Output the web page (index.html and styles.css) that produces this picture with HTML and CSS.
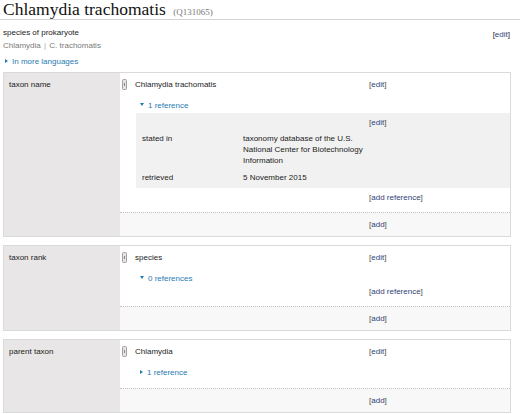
FILE: index.html
```html
<!DOCTYPE html>
<html lang="en">
<head>
    <meta charset="UTF-8">
    <meta name="viewport" content="width=device-width, initial-scale=1.0">
    <title>Chlamydia trachomatis (Q131065)</title>
    <link rel="stylesheet" href="styles.css">
</head>
<body>
    <h1 class="title">
        <span class="title-label">Chlamydia trachomatis</span>
        <span class="qid">(Q131065)</span>
    </h1>

    <div class="header">
        <div class="desc-row">
            <span>species of prokaryote</span>
            <span class="tool">[<a href="#">edit</a>]</span>
        </div>
        <div class="aliases">Chlamydia <span class="sep">|</span> C. trachomatis</div>
        <div class="more"><span class="tri-right"></span>In more languages</div>
    </div>

    <!-- taxon name -->
    <div class="group">
        <div class="prop">taxon name</div>
        <div class="claims">
            <div class="claim">
                <div class="main">
                    <span class="rank"><svg width="5" height="11" viewBox="0 0 5 11"><rect x="0.5" y="0.5" width="4" height="10" rx="1" fill="#e4e4e4" stroke="#a0a0a0"/><rect x="2" y="4" width="1" height="3" fill="#888"/></svg></span>
                    <span class="value">Chlamydia trachomatis</span>
                    <span class="tools">[<a href="#">edit</a>]</span>
                </div>
                <div class="refs-toggle"><span class="tri-down"></span>1 reference</div>
                <div class="ref">
                    <div class="ref-head">
                        <span class="ref-spacer"></span>
                        <span class="tools">[<a href="#">edit</a>]</span>
                    </div>
                    <div class="snak">
                        <span class="snak-prop">stated in</span>
                        <span class="snak-val">taxonomy database of the U.S. National Center for Biotechnology Information</span>
                    </div>
                    <div class="snak">
                        <span class="snak-prop">retrieved</span>
                        <span class="snak-val">5 November 2015</span>
                    </div>
                </div>
                <div class="add-ref">
                    <span class="ref-spacer"></span>
                    <span class="tools">[<a href="#">add reference</a>]</span>
                </div>
            </div>
            <div class="add-claim">
                <span class="ref-spacer"></span>
                <span class="tools">[<a href="#">add</a>]</span>
            </div>
        </div>
    </div>

    <!-- taxon rank -->
    <div class="group">
        <div class="prop">taxon rank</div>
        <div class="claims">
            <div class="claim">
                <div class="main">
                    <span class="rank"><svg width="5" height="11" viewBox="0 0 5 11"><rect x="0.5" y="0.5" width="4" height="10" rx="1" fill="#e4e4e4" stroke="#a0a0a0"/><rect x="2" y="4" width="1" height="3" fill="#888"/></svg></span>
                    <span class="value">species</span>
                    <span class="tools">[<a href="#">edit</a>]</span>
                </div>
                <div class="refs-toggle"><span class="tri-down"></span>0 references</div>
                <div class="add-ref">
                    <span class="ref-spacer"></span>
                    <span class="tools">[<a href="#">add reference</a>]</span>
                </div>
            </div>
            <div class="add-claim">
                <span class="ref-spacer"></span>
                <span class="tools">[<a href="#">add</a>]</span>
            </div>
        </div>
    </div>

    <!-- parent taxon -->
    <div class="group">
        <div class="prop">parent taxon</div>
        <div class="claims">
            <div class="claim collapsed">
                <div class="main">
                    <span class="rank"><svg width="5" height="11" viewBox="0 0 5 11"><rect x="0.5" y="0.5" width="4" height="10" rx="1" fill="#e4e4e4" stroke="#a0a0a0"/><rect x="2" y="4" width="1" height="3" fill="#888"/></svg></span>
                    <span class="value">Chlamydia</span>
                    <span class="tools">[<a href="#">edit</a>]</span>
                </div>
                <div class="refs-toggle"><span class="tri-right"></span>1 reference</div>
            </div>
            <div class="add-claim">
                <span class="ref-spacer"></span>
                <span class="tools">[<a href="#">add</a>]</span>
            </div>
        </div>
    </div>
</body>
</html>
```

FILE: styles.css
```css
html, body {
    margin: 0;
    background-color: #fff;
    font-family: "Liberation Sans", Arial, sans-serif;
    font-size: 8px;
    line-height: 11px;
    color: #1c1c1c;
}
a {
    color: #2f4377;
    text-decoration: none;
}

.title {
    margin: 0;
    padding: 0 0 1px 3px;
    height: 20px;
    box-sizing: border-box;
    border-bottom: 1px solid #d4d4d4;
    font-family: "Liberation Serif", Georgia, serif;
    font-weight: normal;
    font-size: 17.5px;
    line-height: 19px;
    color: #111;
    white-space: nowrap;
}
.qid {
    margin-left: 3px;
    font-size: 9px;
    color: #777;
}

.header {
    padding: 7px 10px 0 3px;
    margin-bottom: 5px;
}
.desc-row {
    display: flex;
    justify-content: space-between;
    align-items: flex-end;
}
.desc-row .tool {
    position: relative;
    top: 2px;
}
.aliases {
    margin-top: 2px;
    color: #7a7a7a;
}
.aliases .sep {
    color: #aaa;
    margin: 0 1px;
}
.more {
    margin-top: 5px;
    padding-left: 2px;
    color: #1f7bb2;
}

.tri-right, .tri-down {
    display: inline-block;
    vertical-align: middle;
    margin-right: 4px;
    position: relative;
    top: -1px;
}
.tri-right {
    border-left: 3px solid #1f7bb2;
    border-top: 2px solid transparent;
    border-bottom: 2px solid transparent;
}
.tri-down {
    border-top: 3px solid #1f7bb2;
    border-left: 2px solid transparent;
    border-right: 2px solid transparent;
}

.group {
    display: flex;
    margin: 0 9px 8px 3px;
    border: 1px solid #dadada;
}
.prop {
    width: 116px;
    flex-shrink: 0;
    box-sizing: border-box;
    padding: 6px 5px;
    background-color: #e8e6e6;
}
.claims {
    flex: 1;
    min-width: 0;
}
.claim.collapsed {
    padding-bottom: 8px;
}
.main {
    display: flex;
    padding-top: 6px;
}
.rank {
    width: 15px;
    padding-left: 2px;
    box-sizing: border-box;
    flex-shrink: 0;
}
.rank svg {
    display: block;
}
.value {
    flex: 1;
}
.tools {
    width: 141px;
    flex-shrink: 0;
    color: #4a4a4a;
}

.refs-toggle {
    margin: 10px 0 2px 20px;
    color: #1f7bb2;
}

.ref {
    margin: 0 0 4px 16px;
    padding-bottom: 2px;
    background-color: #f1f1f1;
}
.ref-head, .add-ref, .add-claim {
    display: flex;
}
.ref-spacer {
    flex: 1;
}
.ref-head {
    padding: 4px 0 2px;
}
.snak {
    display: flex;
    padding: 3px 0;
}
.snak-prop {
    width: 107px;
    padding-left: 6px;
    box-sizing: border-box;
    flex-shrink: 0;
}
.snak-val {
    width: 127px;
}

.add-ref {
    padding-bottom: 9px;
}
.add-claim {
    padding: 6px 0;
    border-top: 1px dotted #c4c4c4;
    background-color: #f8f8f8;
}
```
